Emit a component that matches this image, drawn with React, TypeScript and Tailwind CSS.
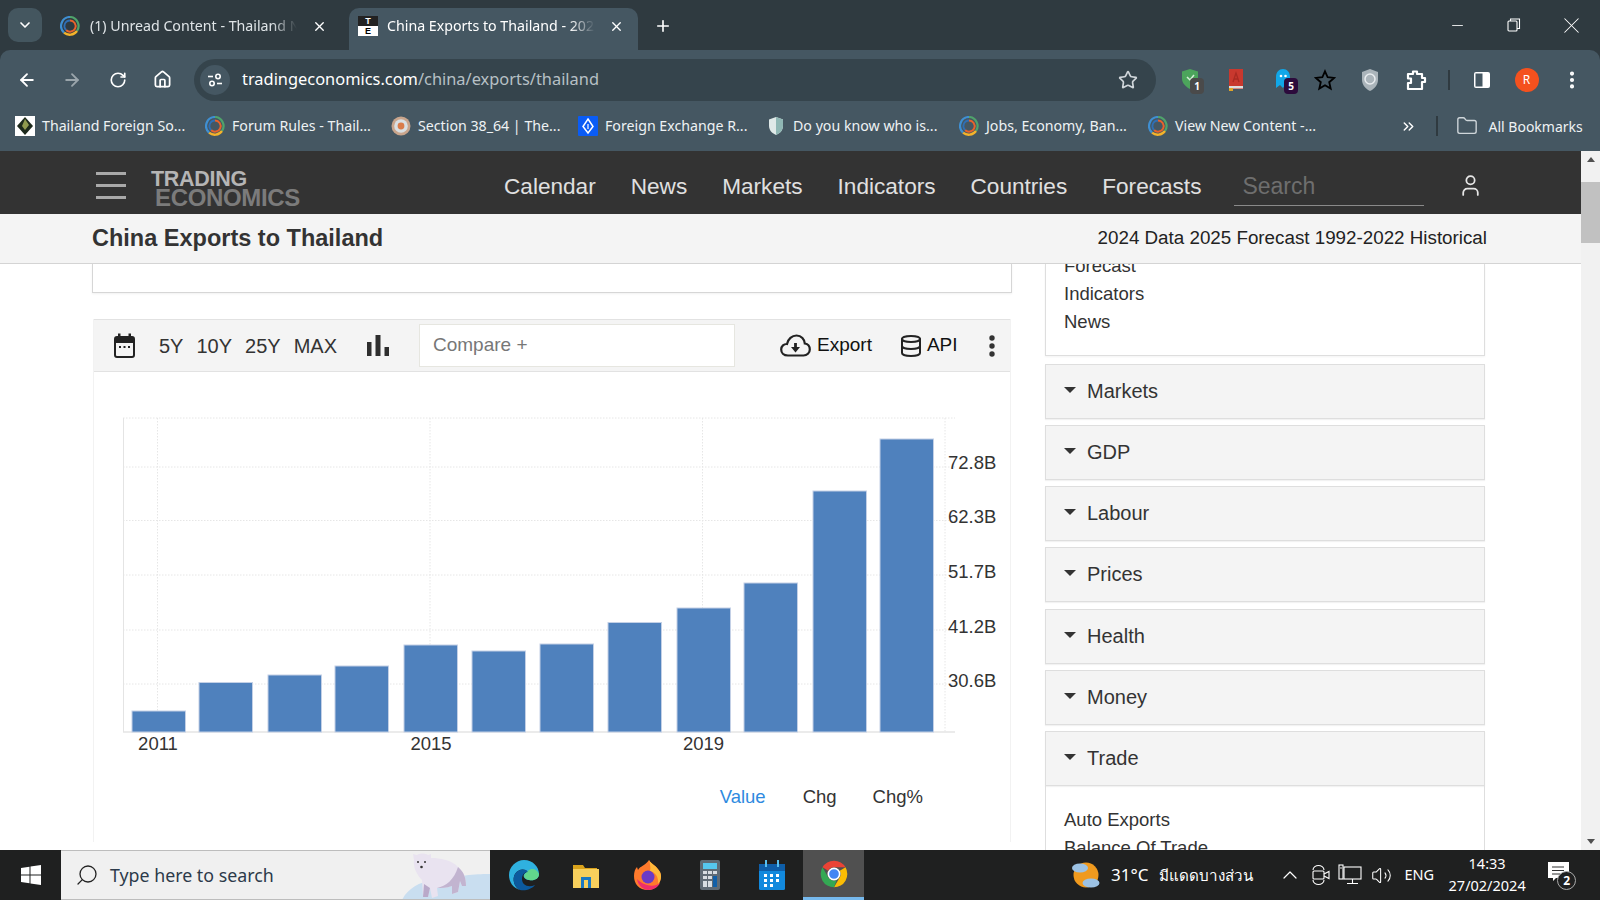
import React from "react";
import { ArrowLeft, ArrowRight, ChevronDown, ChevronUp, Plus, RotateCw, Star, X, Minus, EllipsisVertical, Search, Volume2, Database, User, Folder, ChevronsRight, House } from "lucide-react";

const Ring = ({ s = 20 }: { s?: number }) => (
  <svg width={s} height={s} viewBox="0 0 20 20" className="shrink-0">
    <path d="M10 1 A9 9 0 0 1 17 15" fill="none" stroke="#4fa36b" strokeWidth="2.2" />
    <path d="M17 15 A9 9 0 0 1 4 16.6" fill="none" stroke="#f5b32a" strokeWidth="2.4" />
    <path d="M4 16.6 A9 9 0 0 1 10 1" fill="none" stroke="#3f8fd2" strokeWidth="2.2" />
    <path d="M10 4.5 A5.6 5.6 0 1 1 6 14" fill="none" stroke="#e8622c" strokeWidth="2" />
    <path d="M6 14 A5.6 5.6 0 0 1 10 4.5" fill="none" stroke="#2f6fb5" strokeWidth="1.8" />
  </svg>
);

const TE = () => (
  <div className="w-5 h-5 shrink-0 flex flex-col font-['Liberation_Sans',sans-serif] font-bold text-[9px] leading-[10px] text-center">
    <div className="h-[10px] bg-[#222] text-white">T</div>
    <div className="h-[10px] bg-white text-black">E</div>
  </div>
);

const BM1 = () => (
  <svg width="20" height="20" viewBox="0 0 20 20" className="shrink-0">
    <rect width="20" height="20" fill="#fff" />
    <path d="M10 1 L18 10 L10 19 L2 10Z" fill="#1d2a1c" />
    <path d="M10 3 L14 9 L10 14 L7 10Z" fill="#8f9a4e" />
  </svg>
);
const BM3 = () => (
  <svg width="20" height="20" viewBox="0 0 20 20" className="shrink-0">
    <circle cx="10" cy="10" r="9.5" fill="#c9a58c" />
    <circle cx="10" cy="10" r="6.8" fill="#d9dfe2" />
    <circle cx="10" cy="10" r="3.4" fill="#d97c4a" />
  </svg>
);
const BM4 = () => (
  <svg width="20" height="20" viewBox="0 0 20 20" className="shrink-0">
    <rect width="20" height="20" rx="1" fill="#0a5cf5" />
    <path d="M10 3 L15 10.5 L10 17 L5 10.5Z" fill="none" stroke="#fff" strokeWidth="1.5" />
    <path d="M10 8 V13" stroke="#fff" strokeWidth="1.2" />
  </svg>
);
const BM5 = () => (
  <svg width="20" height="20" viewBox="0 0 20 20" className="shrink-0">
    <path d="M10 1 L17 3.5 V10 C17 14.5 13.5 17.5 10 19 C6.5 17.5 3 14.5 3 10 V3.5Z" fill="#dfe9e8" />
    <path d="M10 1 L17 3.5 V10 C17 14.5 13.5 17.5 10 19Z" fill="#8fb7b4" />
  </svg>
);

const Bookmark = ({ icon, text, w }: { icon: React.ReactNode; text: string; w: string }) => (
  <div className={`flex items-center gap-[7px] shrink-0 ${w}`}>
    {icon}
    <span className="text-[14.2px] text-[#eef2f4] whitespace-nowrap">{text}</span>
  </div>
);

const Badge = ({ n, bg }: { n: string; bg: string }) => (
  <span className={`absolute left-[10px] top-[10px] w-[14px] h-[16px] rounded-[4px] ${bg} text-white text-[10px] font-bold leading-[16px] text-center`}>{n}</span>
);

const chartBars = [
  [132, 711], [199, 682.5], [268, 675], [335, 666], [404, 645], [472, 651],
  [540, 644], [608, 622.5], [677, 608], [744, 583], [813, 491], [880, 439],
];

const ChromeLogo = () => (
  <svg width="32" height="32" viewBox="0 0 48 48">
    <path d="M24 4 A20 20 0 0 1 41.3 14 H24 A10 10 0 0 0 15.3 19 L6.7 14 A20 20 0 0 1 24 4Z" fill="#ea4335" />
    <path d="M41.3 14 A20 20 0 0 1 24 44 L32.7 29 A10 10 0 0 0 32.7 19 Z" fill="#fbbc04" />
    <path d="M24 44 A20 20 0 0 1 6.7 14 L15.3 29 A10 10 0 0 0 24 34 L28 33.5Z" fill="#34a853" />
    <circle cx="24" cy="24" r="8.5" fill="#4285f4" stroke="#fff" strokeWidth="2.5" />
  </svg>
);

const Accordion = ({ label }: { label: string }) => (
  <div className="h-[55px] shrink-0 flex items-center gap-[11px] px-[18px] pb-[1px] bg-[#f4f4f4] border border-[#dedede] shadow-[0_1px_1px_rgba(0,0,0,0.05)]">
    <span className="w-0 h-0 mb-[3px] border-x-[6px] border-x-transparent border-t-[6px] border-t-[#333]" />
    <span className="text-[20px] text-[#333]">{label}</span>
  </div>
);

export default function App() {
  return (
    <div className="w-[1600px] h-[900px] overflow-hidden flex flex-col bg-white">
      {/* Browser chrome */}
      <div className="h-[151px] shrink-0 flex flex-col bg-[#2f3a40] font-['Noto_Sans',sans-serif]">
        <div className="h-[50px] shrink-0 flex items-end pl-2">
          <div className="mb-[8px] w-[34px] h-[34px] rounded-[10px] bg-[#44565f] flex items-center justify-center">
            <ChevronDown size={16} color="#fff" strokeWidth={2.5} />
          </div>
          <div className="w-[307px] h-[42px] flex items-center pl-[18px] pb-[6px]">
            <Ring />
            <span className="ml-[10px] w-[207px] whitespace-nowrap overflow-hidden text-[14.2px] text-[#dfe4e7] [mask-image:linear-gradient(to_right,black_88%,transparent)]">(1) Unread Content - Thailand N</span>
            <X size={15} color="#fff" strokeWidth={2.2} className="ml-[15px]" />
          </div>
          <div className="w-[289px] h-[42px] rounded-t-[10px] bg-[#455762] flex items-center pl-[9px] pb-[6px]">
            <TE />
            <span className="ml-[9px] w-[208px] whitespace-nowrap overflow-hidden text-[14.2px] text-white [mask-image:linear-gradient(to_right,black_88%,transparent)]">China Exports to Thailand - 202</span>
            <X size={15} color="#fff" strokeWidth={2.2} className="ml-[14px]" />
          </div>
          <div className="h-[42px] pb-[6px] ml-[16px] flex items-center">
            <Plus size={18} color="#fff" strokeWidth={2.2} />
          </div>
          <div className="flex-1" />
          <div className="h-[50px] flex items-center text-white">
            <Minus size={17} strokeWidth={1.2} />
            <svg width="14" height="14" viewBox="0 0 14 14" className="ml-[41px]" fill="none" stroke="#fff" strokeWidth="1.1">
              <rect x="1" y="3" width="9" height="10" rx="1" />
              <path d="M3.5 3 V1 H12.5 V10.5 H10" />
            </svg>
            <X size={27} strokeWidth={0.9} className="ml-[37px] mr-[15px]" />
          </div>
        </div>
        <div className="h-[51px] shrink-0 flex items-center bg-[#455762] rounded-t-[10px] pl-[17px] pt-[8px]">
          <ArrowLeft size={20} color="#fff" strokeWidth={2.2} />
          <ArrowRight size={20} color="#9aa5ab" strokeWidth={2.2} className="ml-[25px]" />
          <RotateCw size={18} color="#fff" strokeWidth={2.2} className="ml-[27px]" />
          <House size={19} color="#fff" strokeWidth={2.2} className="ml-[26px]" />
          <div className="ml-[22px] w-[962px] h-[42px] rounded-full bg-[#35444c] flex items-center pl-[6px] pr-[18px]">
            <div className="w-[30px] h-[30px] rounded-full bg-[#455762] flex items-center justify-center">
              <svg width="16" height="16" viewBox="0 0 16 16" fill="none" stroke="#fff" strokeWidth="1.6">
                <path d="M1 4.5 H6" /><circle cx="11" cy="4.5" r="2.2" />
                <path d="M10 11.5 H15" /><circle cx="5" cy="11.5" r="2.2" />
              </svg>
            </div>
            <span className="ml-[12px] text-[16.4px] text-white whitespace-nowrap">tradingeconomics.com<span className="text-[#b7c0c5]">/china/exports/thailand</span></span>
            <div className="flex-1" />
            <Star size={20} color="#d0d6da" strokeWidth={2} />
          </div>
          <div className="ml-[24px] flex items-center">
            <div className="relative w-[24px] h-[24px]">
              <svg width="20" height="22" viewBox="0 0 20 22"><path d="M10 1 L18 3.5 V11 C18 15 14 19 10 21 C6 19 2 15 2 11 V3.5Z" fill="#4ca45c" /><path d="M7 9 L10 12 L14 7" stroke="#d7efd9" strokeWidth="1.5" fill="none" /></svg>
              <Badge n="1" bg="bg-[#4a4a4a]" />
            </div>
            <svg width="18" height="24" viewBox="0 0 18 24" className="ml-[23px]"><rect x="2" y="1" width="14" height="20" fill="#c8382e" /><path d="M6 14 L9 5 L12 14 M7 11 H11" stroke="#a92a22" strokeWidth="1.3" fill="none" /><rect x="2" y="18" width="14" height="2.5" fill="#ddd" /><rect x="2" y="20" width="4" height="3" fill="#e0a528" /></svg>
            <div className="relative w-[24px] h-[24px] ml-[29px]">
              <svg width="18" height="22" viewBox="0 0 18 22"><path d="M2 20 V9 C2 4 5 1 9 1 C13 1 16 4 16 9 V16 L13 14 L9 20 L6 17Z" fill="#11a7e8" /><circle cx="7" cy="8" r="1.3" fill="#fff" /><circle cx="11.5" cy="8" r="1.3" fill="#fff" /></svg>
              <Badge n="5" bg="bg-[#2c0b3c]" />
            </div>
            <svg width="22" height="22" viewBox="0 0 24 24" className="ml-[16px]" fill="none" stroke="#000" strokeWidth="2"><path d="M12 2.5 L14.9 9 L22 9.7 L16.6 14.4 L18.2 21.4 L12 17.7 L5.8 21.4 L7.4 14.4 L2 9.7 L9.1 9Z" /></svg>
            <svg width="20" height="24" viewBox="0 0 20 24" className="ml-[24px]"><path d="M10 1 L18 4 V12 C18 17 14 21 10 23 C6 21 2 17 2 12 V4Z" fill="#aab4ba" /><circle cx="10" cy="11" r="5" fill="none" stroke="#e8ecef" strokeWidth="1.5" /></svg>
            <svg width="22" height="22" viewBox="0 0 22 22" className="ml-[25px]" fill="none" stroke="#fff" strokeWidth="2.2"><path d="M3 5 H8 V2.5 H12 V5 H17 V9 H20 V13 H17 V20 H3 V14 H6 V9.5 H3Z" strokeLinejoin="round" /></svg>
            <div className="ml-[21px] w-[1.5px] h-[20px] bg-[#2f3a40]" />
            <svg width="18" height="18" viewBox="0 0 18 18" className="ml-[23px]"><rect x="1" y="1" width="16" height="16" rx="2" fill="#fff" /><rect x="2.5" y="2.5" width="7" height="13" fill="#455762" /></svg>
            <div className="ml-[24px] w-[24px] h-[24px] rounded-full bg-[#f4511e] flex items-center justify-center text-white text-[12px]">R</div>
            <EllipsisVertical size={22} color="#fff" strokeWidth={2.5} className="ml-[22px]" />
          </div>
        </div>
        <div className="h-[50px] shrink-0 flex items-center bg-[#455762] pl-[15px]">
          <Bookmark icon={<BM1 />} text="Thailand Foreign So..." w="w-[190px]" />
          <Bookmark icon={<Ring />} text="Forum Rules - Thail..." w="w-[186px]" />
          <Bookmark icon={<BM3 />} text="Section 38_64 | The..." w="w-[187px]" />
          <Bookmark icon={<BM4 />} text="Foreign Exchange R..." w="w-[188px]" />
          <Bookmark icon={<BM5 />} text="Do you know who is..." w="w-[193px]" />
          <Bookmark icon={<Ring />} text="Jobs, Economy, Ban..." w="w-[189px]" />
          <Bookmark icon={<Ring />} text="View New Content -..." w="w-[252px]" />
          <ChevronsRight size={17} color="#fff" strokeWidth={2} />
          <div className="ml-[19px] w-[1.5px] h-[20px] bg-[#2f3a40]" />
          <Folder size={22} color="#cfd6da" strokeWidth={1.5} className="ml-[18px]" />
          <span className="ml-[11px] text-[14px] text-[#eef2f4] whitespace-nowrap">All Bookmarks</span>
        </div>
      </div>

      {/* Page */}
      <div className="h-[699px] shrink-0 flex font-['Liberation_Sans',Arial,sans-serif] text-[#333]">
        <div className="w-[1581px] shrink-0 flex flex-col">
          <div className="h-[63px] shrink-0 bg-[#333] flex items-center pl-[96px]">
            <div className="w-[30px] flex flex-col gap-[9px] mt-[6px]">
              <div className="h-[3px] bg-[#a9a9a9]" />
              <div className="h-[3px] bg-[#a9a9a9]" />
              <div className="h-[3px] bg-[#a9a9a9]" />
            </div>
            <div className="ml-[25px] mt-[12px] w-[150px] flex flex-col font-bold">
              <span className="text-[21.5px] text-[#b5b5b5] tracking-[-0.3px] leading-[17px]">TRADING</span>
              <span className="text-[24px] text-[#7b7b7b] ml-[4px] tracking-[-0.35px] leading-[19px]">ECONOMICS</span>
            </div>
            <nav className="ml-[203px] mt-[8px] flex items-center gap-[35px] text-[22.6px] text-[#e0e0e0]">
              <span>Calendar</span><span>News</span><span>Markets</span><span>Indicators</span><span>Countries</span><span>Forecasts</span>
            </nav>
            <div className="ml-[33px] mt-[7px] w-[190px] h-[40px] border-b border-[#8a8a8a] pl-[8px] text-[23px] text-[#6e6e6e] leading-[40px]">Search</div>
            <User size={25} color="#e6e6e6" strokeWidth={1.7} className="ml-[34px] mt-[6px]" />
          </div>
          <div className="h-[50px] shrink-0 bg-[#f4f4f4] border-b border-[#d4d4d4] flex items-center justify-between pl-[92px] pr-[94px]">
            <span className="font-bold text-[23.5px] text-[#333]">China Exports to Thailand</span>
            <span className="text-[18.8px] text-[#222]">2024 Data 2025 Forecast 1992-2022 Historical</span>
          </div>
          <div className="flex-1 min-h-0 overflow-hidden flex items-start pl-[92px]">
            {/* Left */}
            <div className="w-[920px] shrink-0 flex flex-col">
              <div className="h-[29px] shrink-0 bg-white border-x border-b border-[#d6d6d6] shadow-[0_1px_2px_rgba(0,0,0,0.06)]" />
              <div className="mt-[26px] mx-[1px] border-x border-[#f2f2f2]">
                <div className="h-[53px] flex items-center bg-[#f4f4f4] border-y border-[#e2e2e2] text-[20px] text-[#333]">
                  <svg width="21" height="25" viewBox="0 0 21 25" className="ml-[20px]">
                    <rect x="1" y="4" width="19" height="20" rx="2" fill="none" stroke="#222" strokeWidth="2" />
                    <rect x="1" y="4" width="19" height="6" fill="#222" />
                    <rect x="4" y="0.5" width="2.5" height="5" fill="#222" /><rect x="14.5" y="0.5" width="2.5" height="5" fill="#222" />
                    <path d="M5 13 H7 V15 H5Z M9.5 13 H11.5 V15 H9.5Z M14 13 H16 V15 H14Z" fill="#222" />
                  </svg>
                  <span className="ml-[24px]">5Y</span>
                  <span className="ml-[13px]">10Y</span>
                  <span className="ml-[13px]">25Y</span>
                  <span className="ml-[13px]">MAX</span>
                  <svg width="22" height="21" viewBox="0 0 22 21" className="ml-[30px]" fill="#2e2e2e">
                    <rect x="0" y="7" width="4.5" height="14" /><rect x="8.5" y="0" width="5" height="21" /><rect x="17.5" y="12" width="4.5" height="9" />
                  </svg>
                  <div className="ml-[30px] w-[316px] h-[43px] bg-white border border-[#e6e6e0] flex items-center pl-[13px] text-[19px] text-[#777]">Compare +</div>
                  <svg width="31" height="23" viewBox="0 0 31 23" className="ml-[45px]" fill="none" stroke="#222" strokeWidth="2.2">
                    <path d="M8 21.5 C3.5 21.5 1.2 18.5 1.2 15.5 C1.2 12 4 9.8 7 10 C8 5 12 1.5 16.5 1.5 C21.5 1.5 24.5 5.5 24.8 9.5 C27.8 10 29.8 12.5 29.8 15.5 C29.8 19 27 21.5 23.5 21.5Z" />
                    <path d="M15.5 9 V16" strokeWidth="2.8" />
                    <path d="M11 13 H20 L15.5 18.5Z" fill="#222" stroke="none" />
                  </svg>
                  <span className="ml-[6px] text-[19px] text-[#111]">Export</span>
                  <Database size={24} strokeWidth={2} className="ml-[27px] text-[#222]" />
                  <span className="ml-[4px] text-[19px] text-[#111]">API</span>
                  <svg width="6" height="22" viewBox="0 0 6 22" className="ml-[31px]" fill="#333">
                    <circle cx="3" cy="3" r="2.7" /><circle cx="3" cy="11" r="2.7" /><circle cx="3" cy="19" r="2.7" />
                  </svg>
                </div>
                <svg width="916" height="410" viewBox="94 372 916 410" className="block">
                  {[418, 467, 520.5, 575, 630, 684].map((y) => (
                    <line key={y} x1="123" x2="955" y1={y} y2={y} stroke="#e6e6e6" strokeDasharray="1.5 1.5" />
                  ))}
                  {[157.5, 430, 702.5, 945].map((x) => (
                    <line key={x} x1={x} x2={x} y1="418" y2="732" stroke="#e6e6e6" strokeDasharray="1.5 1.5" />
                  ))}
                  <line x1="123.5" x2="123.5" y1="418" y2="732" stroke="#e4e4e4" />
                  <line x1="123" x2="955" y1="732" y2="732" stroke="#e4e4e4" strokeWidth="1.5" />
                  {chartBars.map(([x, y]) => (
                    <rect key={x} x={x} y={y} width="53.5" height={732 - y} fill="#4f81bd" stroke="#c3d0e6" strokeWidth="1" />
                  ))}
                  <g fontSize="18.5" fill="#333" fontFamily="'Liberation Sans', Arial, sans-serif">
                    <text x="948" y="469">72.8B</text>
                    <text x="948" y="523">62.3B</text>
                    <text x="948" y="578">51.7B</text>
                    <text x="948" y="633">41.2B</text>
                    <text x="948" y="687">30.6B</text>
                    <text x="158" y="750" textAnchor="middle">2011</text>
                    <text x="431" y="750" textAnchor="middle">2015</text>
                    <text x="703.5" y="750" textAnchor="middle">2019</text>
                  </g>
                </svg>
                <div className="flex justify-end pr-[87px] text-[18.5px] leading-[30px] h-[60px]">
                  <span className="text-[#2e8ae0]">Value</span>
                  <span className="ml-[37px]">Chg</span>
                  <span className="ml-[36px]">Chg%</span>
                </div>
              </div>
            </div>
            {/* Right */}
            <div className="ml-[33px] w-[440px] shrink-0 flex flex-col gap-[6px]">
              <div className="h-[92px] shrink-0 overflow-hidden bg-white border-x border-b border-[#dedede] pl-[18px] text-[18.5px] leading-[28px] shadow-[0_1px_2px_rgba(0,0,0,0.05)]">
                <div className="-mt-[12px]">Forecast</div>
                <div>Indicators</div>
                <div>News</div>
              </div>
              <div className="flex flex-col gap-[6px] mt-[2px]">
                <Accordion label="Markets" />
                <Accordion label="GDP" />
                <Accordion label="Labour" />
                <Accordion label="Prices" />
                <div className="mt-[1px]"><Accordion label="Health" /></div>
                <Accordion label="Money" />
                <Accordion label="Trade" />
              </div>
              <div className="-mt-[6px] border-x border-[#dedede] pl-[18px] pt-[20px] text-[18.5px] leading-[28px]">
                <div>Auto Exports</div>
                <div>Balance Of Trade</div>
              </div>
            </div>
          </div>
        </div>
        {/* Scrollbar */}
        <div className="w-[19px] shrink-0 bg-[#f1f1f1] flex flex-col items-center">
          <div className="h-[17px] flex items-center"><span className="w-0 h-0 border-x-[4px] border-x-transparent border-b-[5px] border-b-[#505050]" /></div>
          <div className="mt-[14px] w-full h-[61px] bg-[#c1c1c1]" />
          <div className="flex-1" />
          <div className="h-[17px] flex items-center"><span className="w-0 h-0 border-x-[4px] border-x-transparent border-t-[5px] border-t-[#505050]" /></div>
        </div>
      </div>

      {/* Taskbar */}
      <div className="h-[50px] shrink-0 flex items-center bg-[#1f2020] font-['Noto_Sans',sans-serif] text-white">
        <div className="w-[61px] h-full flex items-center justify-center">
          <svg width="20" height="20" viewBox="0 0 20 20" fill="#fff"><path d="M0 3 L8.5 1.8 V9.5 H0Z M9.5 1.6 L20 0 V9.5 H9.5Z M0 10.5 H8.5 V18.2 L0 17Z M9.5 10.5 H20 V20 L9.5 18.4Z" /></svg>
        </div>
        <div className="w-[429px] h-full bg-[#f0f0f0] border-y border-[#bdbdbd] flex items-center pl-[14px] overflow-hidden">
          <Search size={24} color="#222" strokeWidth={1.3} className="-scale-x-100" />
          <span className="ml-[11px] text-[17.8px] text-[#2c3a4a]">Type here to search</span>
          <svg width="90" height="50" viewBox="0 0 90 50" className="ml-auto shrink-0">
            <path d="M2 50 C8 38 24 28 40 32 C60 24 80 24 90 24 V50Z" fill="#c9def0" />
            <path d="M14 10 L13 4 L17 5 C20 3 25 3 28 5 L31 4 L31 8 C40 8 52 10 58 17 C64 22 66 28 66 36 L62 36 L60 31 L58 42 L52 44 L52 36 C46 38 42 38 37 38 L38 46 L32 48 L30 38 L28 47 L23 47 L22 30 C16 24 13 16 14 10Z" fill="#e9e3f0" />
            <path d="M37 38 C46 36 54 30 58 17 C64 22 66 28 66 36 L62 36 L60 31 L58 42 L52 44 L52 36 C46 38 42 38 37 38Z" fill="#c2b4d0" />
            <path d="M30 38 L28 47 L23 47 L24 34Z" fill="#b9a9c9" />
            <circle cx="18" cy="12" r="1" fill="#333" /><circle cx="25" cy="12" r="1" fill="#333" /><circle cx="21.5" cy="17" r="1.3" fill="#333" />
          </svg>
        </div>
        <div className="ml-[18px] flex items-center">
          <svg width="32" height="32" viewBox="0 0 32 32">
            <path d="M16 1 C25 1 31 8 31 15 C31 20 26 22 21 21 C14 20 14 14 20 13 C17 9 10 10 7 15 C4 20 6 28 12 31 C5 29 1 23 1 16 C1 8 8 1 16 1Z" fill="#2fb1df" />
            <path d="M31 15 C31 20 26 22 21 21 C18 20.5 16.5 19 16 17 C20 8 28 8 31 15Z" fill="#62d68c" />
            <path d="M7 15 C4 20 6 28 12 31 C18 32 24 30 27 26 C20 29 14 26 14 20 C14 16 16 13 20 13 C17 9 10 10 7 15Z" fill="#0c5a9e" />
          </svg>
          <svg width="30" height="30" viewBox="0 0 30 30" className="ml-[31px]">
            <path d="M2 5 H12 L14 8 H26 V13 H2Z" fill="#d9a21b" />
            <rect x="2" y="9" width="26" height="19" fill="#f7cf5c" />
            <rect x="10" y="17" width="10" height="11" fill="#1a78c2" />
            <rect x="13" y="20" width="4" height="8" fill="#f7cf5c" />
          </svg>
          <svg width="30" height="32" viewBox="0 0 30 32" className="ml-[32px]">
            <path d="M16 1 C18 5 24 7 27 13 C30 21 25 31 15 31 C6 31 1 25 1 17 C1 13 2 10 4 8 L5 11 C7 7 12 7 16 1Z" fill="#ff7a2c" />
            <path d="M16 1 C18 5 24 7 27 13 C29 17 28 22 25 25 C26 18 22 13 17 12 C18 9 17 5 16 1Z" fill="#ffb93a" />
            <circle cx="15" cy="18" r="6.5" fill="#6b3bc7" />
            <path d="M4 20 C5 27 11 31 15 31 C21 31 25 28 27 24 C22 28 12 28 4 20Z" fill="#ef2e6b" />
          </svg>
          <svg width="20" height="30" viewBox="0 0 20 30" className="ml-[37px]">
            <rect width="20" height="30" rx="2" fill="#5f6b75" />
            <rect x="3" y="3" width="14" height="6" fill="#56c7ee" />
            <path d="M3 11 H7 V14 H3Z M8 11 H12 V14 H8Z M13 11 H17 V14 H13Z M3 16 H7 V19 H3Z M8 16 H12 V19 H8Z M3 21 H7 V27 H3Z M8 21 H12 V27 H8Z" fill="#d7dde2" />
            <rect x="13" y="16" width="4" height="11" fill="#1160a8" />
          </svg>
          <svg width="28" height="30" viewBox="0 0 28 30" className="ml-[38px]">
            <rect x="1" y="4" width="26" height="26" rx="1.5" fill="#1289dd" />
            <rect x="1" y="4" width="26" height="7" fill="#0e5ea8" />
            <rect x="7" y="0" width="2" height="7" fill="#58c0f0" /><rect x="19" y="0" width="2" height="7" fill="#58c0f0" />
            <path d="M6 14 H9 V17 H6Z M12 14 H15 V17 H12Z M18 14 H21 V17 H18Z M6 19 H9 V22 H6Z M12 19 H15 V22 H12Z M18 19 H21 V22 H18Z M6 24 H9 V27 H6Z M12 24 H15 V27 H12Z" fill="#fff" />
          </svg>
          <div className="ml-[17px] w-[61px] h-[50px] flex items-center justify-center bg-[#505050] border-b-[3px] border-[#76b9ed]">
            <ChromeLogo />
          </div>
        </div>
        <div className="ml-[207px] flex items-center">
          <svg width="30" height="30" viewBox="0 0 30 30">
            <circle cx="15" cy="15" r="12.5" fill="#f09a1e" />
            <ellipse cx="9" cy="8" rx="8" ry="4.5" fill="#9cc2e4" />
            <ellipse cx="20" cy="23" rx="8.5" ry="4.5" fill="#9cc2e4" />
          </svg>
          <span className="ml-[10px] text-[17px] whitespace-nowrap">31°C</span>
          <span className="ml-[11px] w-[95px] text-[15.2px] whitespace-nowrap">มีแดดบางส่วน</span>
        </div>
        <ChevronUp size={24} strokeWidth={1.2} className="ml-[24px]" />
        <svg width="20" height="22" viewBox="0 0 20 22" className="ml-[9px]" fill="none" stroke="#fff" strokeWidth="1.1">
          <path d="M2 6 C2 3 5 1.5 7.5 1.5 C10 1.5 13 3 13 6 M2 16 C2 19 5 20.5 7.5 20.5 C10 20.5 13 19 13 16" />
          <rect x="2" y="7" width="11" height="8" rx="1" /><path d="M13 10 L18 7.5 V14.5 L13 12" />
        </svg>
        <svg width="24" height="22" viewBox="0 0 24 22" className="ml-[7px]" fill="none" stroke="#fff" strokeWidth="1.1">
          <rect x="6" y="3" width="17" height="12" /><path d="M14.5 15 V19 M9 19.5 H20" /><rect x="1" y="1" width="4" height="14" fill="#1f2020" /><circle cx="3" cy="4" r="0.8" fill="#fff" stroke="none" />
        </svg>
        <Volume2 size={21} strokeWidth={1.2} className="ml-[9px]" />
        <span className="ml-[12px] text-[14.5px] whitespace-nowrap">ENG</span>
        <div className="ml-[15px] mb-[2px] w-[76px] flex flex-col items-center text-[14.5px] leading-[22px] whitespace-nowrap">
          <span>14:33</span><span>27/02/2024</span>
        </div>
        <div className="relative ml-[23px] w-[26px] h-[26px]">
          <svg width="21" height="21" viewBox="0 0 21 21"><path d="M0 0 H21 V16 H8 L5 19 V16 H0Z" fill="#fff" /><path d="M4 5 H16 M4 8.5 H16 M4 12 H12" stroke="#333" strokeWidth="1.1" /></svg>
          <span className="absolute left-[9px] top-[9px] w-[19px] h-[19px] rounded-full bg-[#1f2020] border border-[#aaa] text-[12px] font-bold leading-[17px] text-center">2</span>
        </div>
      </div>
    </div>
  );
}
